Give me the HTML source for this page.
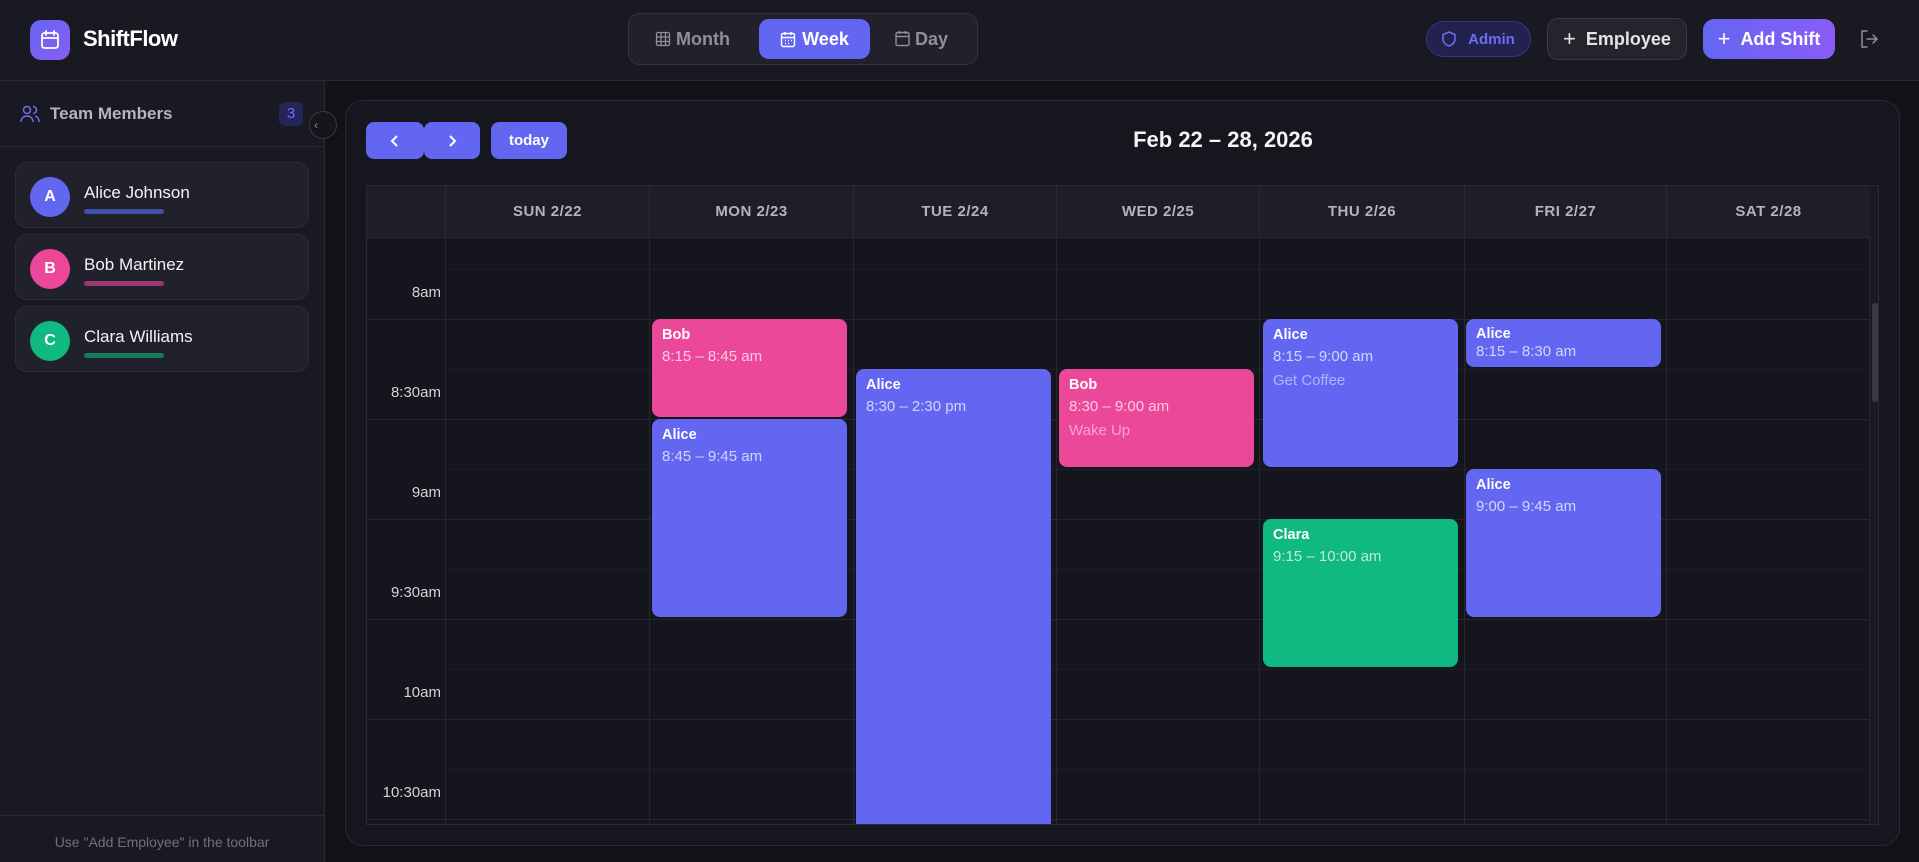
<!DOCTYPE html>
<html><head><meta charset="utf-8"><style>
*{box-sizing:border-box;margin:0;padding:0}
body{width:1919px;height:862px;overflow:hidden;background:#111118;font-family:"Liberation Sans",sans-serif;color:#e4e4e7;position:relative}
.abs{position:absolute}
.hdr{left:0;top:0;width:1919px;height:81px;background:#191921;border-bottom:1px solid #2a2a35}
.side{left:0;top:81px;width:325px;height:781px;background:#191921;border-right:1px solid #2a2a35}
.card{left:15px;width:294px;height:66px;background:#21212b;border:1px solid #2e2e3a;border-radius:12px}
.av{left:14px;top:14px;width:40px;height:40px;border-radius:50%;color:#fff;font-weight:bold;font-size:16px;text-align:center;line-height:40px}
.nm{left:68px;top:20px;font-size:17px;color:#f4f4f5}
.bar{left:68px;top:46px;width:80px;height:5px;border-radius:3px}
.btn{border-radius:9px;display:flex;align-items:center;justify-content:center;font-weight:bold}
.dh{top:0;height:52px;line-height:52px;text-align:center;font-size:15px;font-weight:bold;color:#b4b4bd;letter-spacing:.5px;border-left:1px solid #2a2a35}
.ev{border-radius:8px;color:#fff;padding:0 10px;overflow:hidden}
.ev b{display:block;font-size:14.5px;margin-top:8px}
.ev span{display:block;font-size:15px;color:rgba(255,255,255,.72);margin-top:5px}
.ev i{display:block;font-style:normal;font-size:15px;color:rgba(255,255,255,.5);margin-top:7px}
.tl{left:0;width:74px;text-align:right;font-size:15px;color:#d4d4d8}
</style></head><body>
<div class="abs hdr">
 <div class="abs" style="left:30px;top:20px;width:40px;height:40px;border-radius:11px;background:linear-gradient(135deg,#6366f1,#8b5cf6)">
  <svg width="40" height="40" viewBox="0 0 40 40" fill="none" stroke="#fff" stroke-width="1.8" stroke-linecap="round"><rect x="12" y="13" width="16" height="15" rx="2.5"/><path d="M12 18h16M16 11v4M24 11v4"/></svg></div>
 <div class="abs" style="left:83px;top:26px;font-size:22px;font-weight:bold;color:#fff;letter-spacing:-.5px">ShiftFlow</div>
 <div class="abs" style="left:628px;top:13px;width:350px;height:52px;border:1px solid #33333f;border-radius:12px;background:#21212b"></div>
 <div class="abs" style="left:655px;top:29px;font-size:18px;color:#8f8f99;font-weight:bold">
  <svg width="16" height="16" viewBox="0 0 16 16" fill="none" stroke="#8f8f99" stroke-width="1.3" style="vertical-align:-2px"><rect x="1.5" y="1.5" width="13" height="13" rx="1.5"/><path d="M1.5 6h13M1.5 10.5h13M6 1.5v13M10.5 1.5v13"/></svg> Month</div>
 <div class="abs btn" style="left:759px;top:19px;width:111px;height:40px;background:#6366f1;border-radius:10px;color:#fff;font-size:18px">
  <svg width="16" height="17" viewBox="0 0 16 17" fill="none" stroke="#fff" stroke-width="1.4" style="margin-right:6px"><rect x="1.5" y="2.5" width="13" height="13" rx="1.5"/><path d="M1.5 6.5h13M5 1v3M11 1v3M5 9.5h1M8 9.5h1M11 9.5h1M5 12.5h1M8 12.5h1"/></svg>Week</div>
 <div class="abs" style="left:895px;top:29px;font-size:18px;color:#8f8f99;font-weight:bold">
  <svg width="15" height="17" viewBox="0 0 15 17" fill="none" stroke="#8f8f99" stroke-width="1.4" style="vertical-align:-2px"><rect x="1" y="2.5" width="13" height="13" rx="1.5"/><path d="M1 6.5h13M4.5 1v3M10.5 1v3"/></svg> Day</div>
 <div class="abs btn" style="left:1426px;top:21px;width:105px;height:36px;border-radius:18px;background:#222250;border:1px solid #34348a;color:#6b6ff0;font-size:15px;font-weight:bold">
  <svg width="14" height="16" viewBox="0 0 14 16" fill="none" stroke="#6b6ff0" stroke-width="1.5" style="margin-right:12px"><path d="M7 1L13 3.5V8c0 3.5-3 6-6 7-3-1-6-3.5-6-7V3.5z"/></svg>Admin</div>
 <div class="abs btn" style="left:1547px;top:18px;width:140px;height:42px;border-radius:11px;background:#24242d;border:1px solid #3a3a45;color:#e4e4e7;font-size:18px">
  <span style="font-weight:normal;font-size:22px;margin-right:10px">+</span>Employee</div>
 <div class="abs btn" style="left:1703px;top:19px;width:132px;height:40px;border-radius:11px;background:linear-gradient(90deg,#6366f1,#8b5cf6);color:#fff;font-size:18px">
  <span style="font-weight:normal;font-size:22px;margin-right:10px">+</span>Add Shift</div>
 <svg class="abs" style="left:1859px;top:29px" width="20" height="20" viewBox="0 0 20 20" fill="none" stroke="#8f8f99" stroke-width="1.5" stroke-linecap="round"><path d="M8 2H3v16h5M8 10h10M14 6l4 4-4 4"/></svg>
</div>
<div class="abs side">
 <svg class="abs" style="left:20px;top:24px" width="20" height="18" viewBox="0 0 20 18" fill="none" stroke="#6b6ff0" stroke-width="1.5"><circle cx="7" cy="5" r="3.5"/><path d="M1 17c0-4 3-6 6-6s6 2 6 6M13 1.5a3.5 3.5 0 010 7M15 11c2 .5 4 2 4 6"/></svg>
 <div class="abs" style="left:50px;top:23px;font-size:17px;font-weight:bold;color:#b4b4bd">Team Members</div>
 <div class="abs" style="left:279px;top:21px;width:24px;height:24px;border-radius:6px;background:#25255a;color:#6b6ff0;font-size:15px;text-align:center;line-height:24px">3</div>
 <div class="abs" style="left:0;top:65px;width:324px;height:1px;background:#2a2a35"></div>
 <div class="abs card" style="top:81px"><div class="abs av" style="background:#6366f1">A</div><div class="abs nm">Alice Johnson</div><div class="abs bar" style="background:#4150a8"></div></div>
 <div class="abs card" style="top:153px"><div class="abs av" style="background:#ec4899">B</div><div class="abs nm">Bob Martinez</div><div class="abs bar" style="background:#9c3770"></div></div>
 <div class="abs card" style="top:225px"><div class="abs av" style="background:#10b981">C</div><div class="abs nm">Clara Williams</div><div class="abs bar" style="background:#147a5a"></div></div>
 <div class="abs" style="left:0;top:734px;width:324px;height:1px;background:#2a2a35"></div>
 <div class="abs" style="left:0;top:753px;width:324px;text-align:center;font-size:14px;color:#71717a">Use "Add Employee" in the toolbar</div>
</div>
<div class="abs" style="left:309px;top:111px;width:28px;height:28px;border-radius:50%;background:#15151c;border:1px solid #3a3a45;color:#8f8f99;font-size:12px;line-height:26px;padding-left:4px">‹</div>
<div class="abs" style="left:345px;top:100px;width:1555px;height:746px;background:#16161e;border:1px solid #2a2a35;border-radius:18px"></div>
<div class="abs btn" style="left:366px;top:122px;width:58px;height:37px;background:#6366f1;border-radius:8px"><svg width="12" height="14" viewBox="0 0 12 14" fill="none" stroke="#fff" stroke-width="2"><path d="M8 2L3 7l5 5"/></svg></div>
<div class="abs btn" style="left:424px;top:122px;width:56px;height:37px;background:#6366f1;border-radius:8px"><svg width="12" height="14" viewBox="0 0 12 14" fill="none" stroke="#fff" stroke-width="2"><path d="M4 2l5 5-5 5"/></svg></div>
<div class="abs btn" style="left:491px;top:122px;width:76px;height:37px;background:#6366f1;border-radius:8px;color:#fff;font-size:15px">today</div>
<div class="abs" style="left:1023px;top:127px;width:400px;text-align:center;font-size:22px;font-weight:bold;color:#f4f4f5">Feb 22 – 28, 2026</div>
<div class="abs" style="left:366px;top:185px;width:1513px;height:640px;border:1px solid #2a2a35;overflow:hidden;background:#15151d">
 <div class="abs" style="left:0;top:0;width:1503px;height:52px;background:#1e1e27;border-bottom:1px solid #2a2a35"></div>
 <div class="abs" style="left:1503px;top:0;width:10px;height:640px;background:#1a1a22"></div>
 <div class="abs" style="left:1505px;top:117px;width:6px;height:99px;background:#3a3a45;border-radius:3px"></div>
 <div class="abs dh" style="left:78px;width:204px">SUN 2/22</div>
 <div class="abs dh" style="left:282px;width:204px">MON 2/23</div>
 <div class="abs dh" style="left:486px;width:203px">TUE 2/24</div>
 <div class="abs dh" style="left:689px;width:203px">WED 2/25</div>
 <div class="abs dh" style="left:892px;width:205px">THU 2/26</div>
 <div class="abs dh" style="left:1097px;width:202px">FRI 2/27</div>
 <div class="abs dh" style="left:1299px;width:204px">SAT 2/28</div>
 <svg class="abs" style="left:0;top:52px" width="1503" height="588">
  <g stroke="#262630" stroke-width="1">
   <line x1="78" y1="31.5" x2="1503" y2="31.5" stroke-dasharray="2 2"/>
   <line x1="0" y1="81.5" x2="1503" y2="81.5"/>
   <line x1="78" y1="131.5" x2="1503" y2="131.5" stroke-dasharray="2 2"/>
   <line x1="0" y1="181.5" x2="1503" y2="181.5"/>
   <line x1="78" y1="231.5" x2="1503" y2="231.5" stroke-dasharray="2 2"/>
   <line x1="0" y1="281.5" x2="1503" y2="281.5"/>
   <line x1="78" y1="331.5" x2="1503" y2="331.5" stroke-dasharray="2 2"/>
   <line x1="0" y1="381.5" x2="1503" y2="381.5"/>
   <line x1="78" y1="431.5" x2="1503" y2="431.5" stroke-dasharray="2 2"/>
   <line x1="0" y1="481.5" x2="1503" y2="481.5"/>
   <line x1="78" y1="531.5" x2="1503" y2="531.5" stroke-dasharray="2 2"/>
   <line x1="0" y1="581.5" x2="1503" y2="581.5"/>
   <line x1="78.5" y1="0" x2="78.5" y2="588"/><line x1="282.5" y1="0" x2="282.5" y2="588"/><line x1="486.5" y1="0" x2="486.5" y2="588"/><line x1="689.5" y1="0" x2="689.5" y2="588"/><line x1="892.5" y1="0" x2="892.5" y2="588"/><line x1="1097.5" y1="0" x2="1097.5" y2="588"/><line x1="1299.5" y1="0" x2="1299.5" y2="588"/><line x1="1502.5" y1="0" x2="1502.5" y2="588"/>
  </g></svg>
 <div class="abs tl" style="top:98px">8am</div>
 <div class="abs tl" style="top:198px">8:30am</div>
 <div class="abs tl" style="top:298px">9am</div>
 <div class="abs tl" style="top:398px">9:30am</div>
 <div class="abs tl" style="top:498px">10am</div>
 <div class="abs tl" style="top:598px">10:30am</div>
 <div class="abs ev" style="left:285px;top:133px;width:195px;height:98px;background:#ec4899"><b>Bob</b><span>8:15 – 8:45 am</span></div>
 <div class="abs ev" style="left:285px;top:233px;width:195px;height:198px;background:#6366f1"><b>Alice</b><span>8:45 – 9:45 am</span></div>
 <div class="abs ev" style="left:489px;top:183px;width:195px;height:480px;background:#6366f1"><b>Alice</b><span>8:30 – 2:30 pm</span></div>
 <div class="abs ev" style="left:692px;top:183px;width:195px;height:98px;background:#ec4899"><b>Bob</b><span>8:30 – 9:00 am</span><i>Wake Up</i></div>
 <div class="abs ev" style="left:896px;top:133px;width:195px;height:148px;background:#6366f1"><b>Alice</b><span>8:15 – 9:00 am</span><i>Get Coffee</i></div>
 <div class="abs ev" style="left:896px;top:333px;width:195px;height:148px;background:#10b981"><b>Clara</b><span>9:15 – 10:00 am</span></div>
 <div class="abs ev" style="left:1099px;top:133px;width:195px;height:48px;background:#6366f1"><b style="margin-top:7px">Alice</b><span style="margin-top:1px">8:15 – 8:30 am</span></div>
 <div class="abs ev" style="left:1099px;top:283px;width:195px;height:148px;background:#6366f1"><b>Alice</b><span>9:00 – 9:45 am</span></div>
</div>
</body></html>
